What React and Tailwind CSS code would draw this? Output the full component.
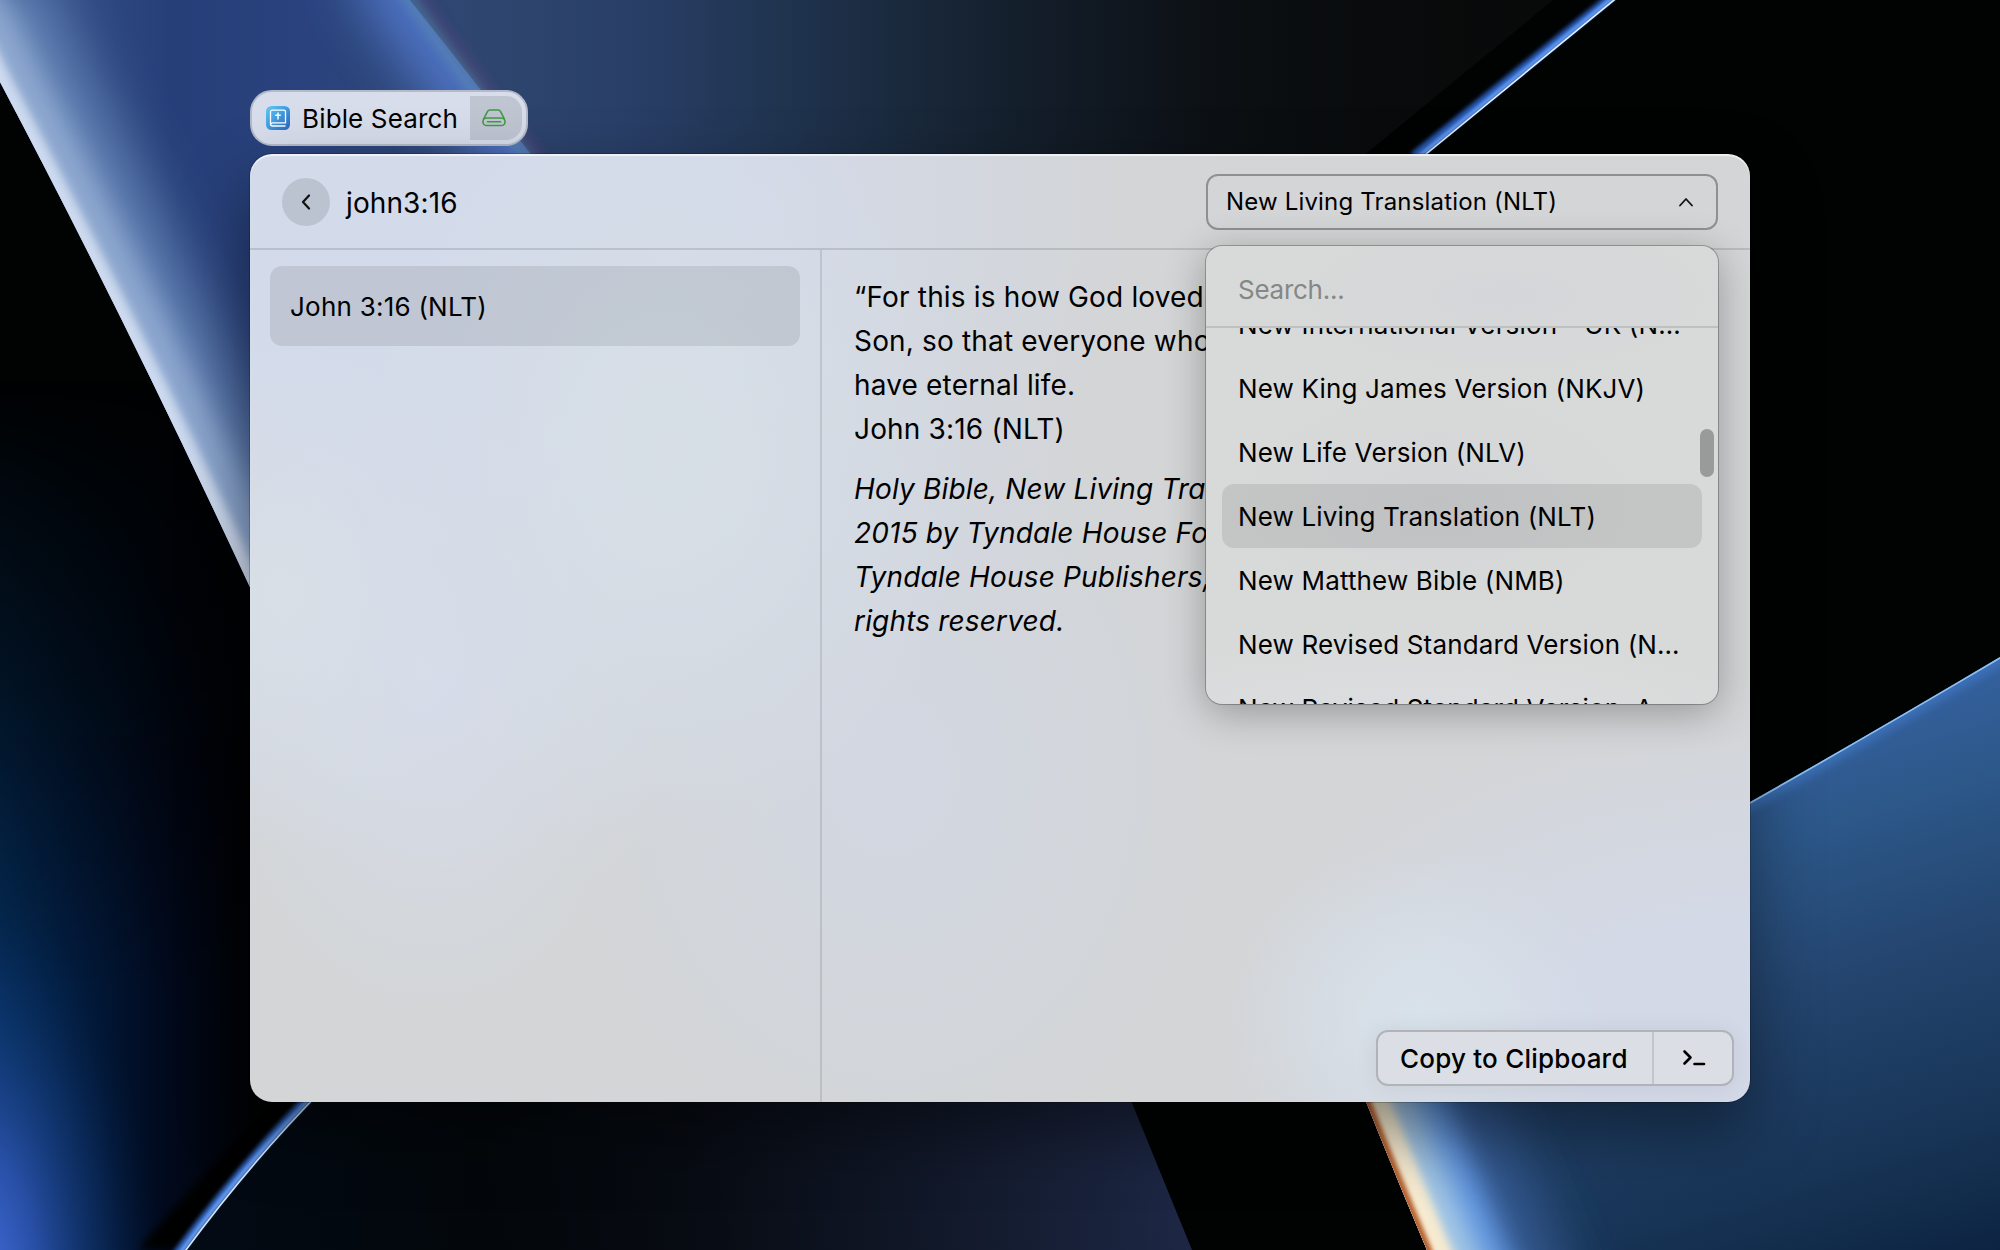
import React from "react";

const VERSIONS = [
  "New International Version - UK (NIVUK)",
  "New King James Version (NKJV)",
  "New Life Version (NLV)",
  "New Living Translation (NLT)",
  "New Matthew Bible (NMB)",
  "New Revised Standard Version (NRSV)",
  "New Revised Standard Version, Anglicised (NRSVA)",
];
const SELECTED = "New Living Translation (NLT)";

const LEFT_EDGE = "M-40 0 L0 82 Q127 322 255 598 L340 790";
const RIGHT_EDGE = "M1330 1010 Q1388 1160 1444 1290 L1490 1400";

function Blur({ id, deviation }) {
  return (
    <filter id={id} filterUnits="userSpaceOnUse" x="-200" y="-200" width="2400" height="1650">
      <feGaussianBlur stdDeviation={deviation} />
    </filter>
  );
}

function Wallpaper() {
  return (
    <svg className="absolute inset-0" width="2000" height="1250" viewBox="0 0 2000 1250" aria-hidden="true">
      <defs>
        <linearGradient id="sky" gradientUnits="userSpaceOnUse" x1="0" y1="0" x2="1560" y2="0">
          <stop offset="0" stopColor="#3a558e" />
          <stop offset="0.11" stopColor="#263f79" />
          <stop offset="0.2" stopColor="#2a437e" />
          <stop offset="0.3" stopColor="#2f4770" />
          <stop offset="0.4" stopColor="#293f68" />
          <stop offset="0.5" stopColor="#203450" />
          <stop offset="0.6" stopColor="#182637" />
          <stop offset="0.68" stopColor="#121b26" />
          <stop offset="0.78" stopColor="#0c1014" />
          <stop offset="0.88" stopColor="#090b0c" />
          <stop offset="1" stopColor="#080909" />
        </linearGradient>
        <linearGradient id="left" x1="0" x2="1" y1="0" y2="0">
          <stop offset="0" stopColor="#042c58" />
          <stop offset="0.3" stopColor="#021b3d" />
          <stop offset="0.65" stopColor="#010a1e" />
          <stop offset="1" stopColor="#010204" />
        </linearGradient>
        <linearGradient id="fadeDown" x1="0" x2="0" y1="0" y2="1">
          <stop offset="0" stopColor="#000" />
          <stop offset="0.35" stopColor="#666" />
          <stop offset="0.7" stopColor="#fff" />
        </linearGradient>
        <mask id="leftMask">
          <rect x="0" y="380" width="400" height="870" fill="url(#fadeDown)" />
        </mask>
        <radialGradient id="corner" gradientUnits="userSpaceOnUse" cx="0" cy="0" r="1" gradientTransform="translate(-30 1290) scale(190 400)">
          <stop offset="0" stopColor="#4a74ea" />
          <stop offset="0.35" stopColor="#3058b8" stopOpacity="0.85" />
          <stop offset="0.7" stopColor="#164084" stopOpacity="0.4" />
          <stop offset="1" stopColor="#032048" stopOpacity="0" />
        </radialGradient>
        <linearGradient id="floor" gradientUnits="userSpaceOnUse" x1="190" y1="1250" x2="1180" y2="1180">
          <stop offset="0" stopColor="#020a14" />
          <stop offset="0.3" stopColor="#03070b" />
          <stop offset="0.5" stopColor="#070b12" />
          <stop offset="0.75" stopColor="#111829" />
          <stop offset="1" stopColor="#1d2744" />
        </linearGradient>
        <linearGradient id="ocean" gradientUnits="userSpaceOnUse" x1="1790" y1="720" x2="1960" y2="1270">
          <stop offset="0" stopColor="#35619f" />
          <stop offset="0.2" stopColor="#2c5788" />
          <stop offset="0.45" stopColor="#24456f" />
          <stop offset="0.75" stopColor="#183557" />
          <stop offset="1" stopColor="#0c2340" />
        </linearGradient>
        <clipPath id="clipLeft">
          <path d="M-40 0 L0 82 Q127 322 255 598 L900 598 L900 0Z" />
        </clipPath>
        <clipPath id="clipRight">
          <path d="M1330 1010 Q1388 1160 1444 1290 L2000 1290 L2000 657 Q1872 733 1750 802Z" />
        </clipPath>
        <clipPath id="clipBeam">
          <path d="M0 0 H410 Q464 68 547 175 L547 600 H0Z" />
        </clipPath>
        <Blur id="b1" deviation="1.2" />
        <Blur id="b2" deviation="2" />
        <Blur id="b4" deviation="4" />
        <Blur id="b12" deviation="12" />
        <Blur id="b25" deviation="28" />
      </defs>
      <rect width="2000" height="1250" fill="#010202" />

      <g mask="url(#leftMask)">
        <rect x="0" y="380" width="250" height="870" fill="url(#left)" />
      </g>
      <rect x="0" y="860" width="220" height="390" fill="url(#corner)" />

      <g clipPath="url(#clipLeft)">
        <rect width="900" height="600" fill="url(#sky)" />
        <g clipPath="url(#clipBeam)">
          <path d="M395 -60 L400 -20 Q450 58 535 168 L600 250" fill="none" stroke="#4f74c8" strokeWidth="84" filter="url(#b25)" />
        </g>
        <path d="M404 -10 Q458 68 541 175" fill="none" stroke="#5c8fae" strokeOpacity="0.45" strokeWidth="16" filter="url(#b4)" />
        <path d="M418 -10 Q472 68 555 175" fill="none" stroke="#55407a" strokeOpacity="0.45" strokeWidth="10" filter="url(#b4)" />
        <path d={LEFT_EDGE} fill="none" stroke="#6f90c0" strokeWidth="160" strokeOpacity="0.8" filter="url(#b25)" />
        <path d={LEFT_EDGE} fill="none" stroke="#a0b8dc" strokeWidth="80" strokeOpacity="0.7" filter="url(#b12)" />
        <path d={LEFT_EDGE} fill="none" stroke="#e2eaf8" strokeWidth="24" strokeOpacity="0.75" filter="url(#b4)" />
      </g>
      <path d="M899 0 H1553 L1340 175 H899Z" fill="url(#sky)" />

      <path d="M1611 -4 L1413 156" stroke="#2c5fc0" strokeWidth="7" filter="url(#b2)" />
      <path d="M1615 -4 L1417 158" stroke="#5a92ea" strokeWidth="5" filter="url(#b1)" />
      <path d="M1619 -4 L1420 159" stroke="#e6f0ff" strokeWidth="1.6" />

      <path d="M310 1102 L280 1102 Q200 1175 138 1250 L184 1250Z" fill="#010101" filter="url(#b4)" />
      <path d="M324 1086 Q249 1164 184 1250 H1192 L1125 1086Z" fill="url(#floor)" />
      <path d="M317 1088 Q242 1164 176 1254" fill="none" stroke="#3468c4" strokeWidth="7" filter="url(#b2)" />
      <path d="M320.500 1088 Q245 1164 179.500 1254" fill="none" stroke="#5f96ea" strokeWidth="4.5" filter="url(#b1)" />
      <path d="M324 1088 Q249 1164 183 1254" fill="none" stroke="#d8e4f4" strokeWidth="1.6" />

      <g clipPath="url(#clipRight)">
        <rect x="1300" y="640" width="700" height="650" fill="url(#ocean)" />
        <path d={RIGHT_EDGE} fill="none" stroke="#3c66a4" strokeWidth="240" strokeOpacity="0.75" filter="url(#b25)" />
        <path d={RIGHT_EDGE} fill="none" stroke="#659ce8" strokeWidth="150" strokeOpacity="0.9" filter="url(#b12)" />
        <path d={RIGHT_EDGE} fill="none" stroke="#a5c8e4" strokeWidth="92" filter="url(#b12)" />
        <path d={RIGHT_EDGE} fill="none" stroke="#f6ead0" strokeWidth="46" filter="url(#b4)" />
        <path d={RIGHT_EDGE} fill="none" stroke="#b8622e" strokeWidth="10" filter="url(#b2)" />
        <path d="M1740 808 Q1872 734 2004 656" fill="none" stroke="#3f78c4" strokeWidth="14" strokeOpacity="0.7" filter="url(#b4)" />
        <path d="M1740 808 Q1872 733 2004 655" fill="none" stroke="#8cc0f2" strokeWidth="3" />
      </g>
    </svg>
  );
}

function BibleIcon() {
  return (
    <svg width="24" height="24" viewBox="0 0 24 24" fill="none">
      <defs>
        <linearGradient id="bible" x1="0" y1="0" x2="1" y2="1">
          <stop offset="0" stopColor="#5ccbf7" />
          <stop offset="0.5" stopColor="#429ade" />
          <stop offset="1" stopColor="#2b62b8" />
        </linearGradient>
      </defs>
      <rect width="24" height="24" rx="5.500" fill="url(#bible)" />
      <path d="M19.500 20H6.700A2.200 2.200 0 0 1 4.500 17.800V5.700A1.500 1.500 0 0 1 6 4.200H18A1.500 1.500 0 0 1 19.500 5.700V16.800H6.500A1.700 1.700 0 0 0 4.800 18" stroke="#fff" strokeWidth="1.300" />
      <path d="M12 6.600V13.400M9.200 9.200H14.800" stroke="#fff" strokeWidth="1.500" />
    </svg>
  );
}

function DriveIcon() {
  return (
    <svg width="24" height="18" viewBox="0 0 24 18" fill="none" stroke="#3f9a45" strokeWidth="1.600" strokeLinecap="round" strokeLinejoin="round">
      <path d="M1.600 10L5.400 2.600A3 3 0 0 1 8 1H16A3 3 0 0 1 18.600 2.600L22.400 10" />
      <rect x="1" y="9" width="22" height="7.500" rx="3.600" />
      <path d="M5.500 12.700H18.500" />
    </svg>
  );
}

function ExtensionPill() {
  return (
    <div className="flex h-14 w-[278px] items-center justify-between rounded-[22px] border-2 border-[#b4bac8] bg-[#d7ddeb] pl-[14px] pr-1">
      <BibleIcon />
      <span className="pt-0.5 text-[26px] leading-8 tracking-[0.005em]">Bible Search</span>
      <div className="flex h-11 w-[52px] items-center justify-center rounded-r-[16px] bg-[#c0c5d2] pr-1">
        <DriveIcon />
      </div>
    </div>
  );
}

function VersionPopup() {
  return (
    <div className="absolute left-0 top-[72px] z-10 flex h-[458px] w-[512px] flex-col overflow-hidden rounded-2xl bg-[#d8dad9] bg-[radial-gradient(ellipse_240px_90px_at_300px_50px,#d5d6d9,transparent),radial-gradient(ellipse_220px_120px_at_230px_255px,#d4d5d7,transparent),radial-gradient(ellipse_400px_70px_at_200px_458px,#dcdde0,transparent)] shadow-[0_0_0_1px_rgba(0,0,0,0.25),0_8px_40px_rgba(0,0,0,0.3)]">
      <div className="h-[82px] shrink-0 border-b-2 border-[#bfc1c1] px-8 pt-7 text-[26px] leading-8 tracking-[-0.01em] text-[#858786]">Search...</div>
      <div className="relative min-h-0 flex-1 overflow-hidden px-4">
        <div className="-mt-9">
          {VERSIONS.map((name) => (
            <div
              key={name}
              className={
                "h-16 rounded-xl pl-4 pr-[18px] text-[26px] leading-[65px] tracking-[0.006em] " +
                (name === SELECTED ? "bg-black/9" : "")
              }
            >
              <div className="truncate">{name}</div>
            </div>
          ))}
        </div>
        <div className="absolute right-1 top-[101px] h-12 w-[14px] rounded-full bg-[#999b9a]" />
      </div>
    </div>
  );
}

function VersionSelect() {
  return (
    <div className="relative">
      <div className="flex h-14 w-[512px] items-center justify-between rounded-xl border-2 border-[#8f9191] pl-[18px] pr-[22px]">
        <span className="text-[24px] leading-8 tracking-[0.007em]">{SELECTED}</span>
        <svg width="16" height="10" viewBox="0 0 16 10" fill="none" stroke="#111" strokeWidth="1.800" strokeLinecap="round" strokeLinejoin="round">
          <path d="M2 8.500L8 2L14 8.500" />
        </svg>
      </div>
      <VersionPopup />
    </div>
  );
}

function Header() {
  return (
    <header className="flex h-24 items-center justify-between border-b-2 border-black/12 px-8 pt-0.5">
      <div className="flex items-center gap-4">
        <div className="flex size-12 items-center justify-center rounded-full bg-black/11">
          <svg width="10" height="16" viewBox="0 0 10 16" fill="none" stroke="#111" strokeWidth="2.200" strokeLinecap="round" strokeLinejoin="round">
            <path d="M8 1.500L2 8L8 14.500" />
          </svg>
        </div>
        <span className="pt-px text-[28px] leading-9 tracking-[0.004em]">john3:16</span>
      </div>
      <VersionSelect />
    </header>
  );
}

function Verse() {
  return (
    <main className="flex min-w-0 flex-1 flex-col justify-between">
      <div className="whitespace-nowrap pl-8 pt-[25px] text-[28px] leading-[44px] tracking-[0.006em]">
        <p>
          “For this is how God loved the world: He gave his one and only
          <br />
          Son, so that everyone who believes in him will not perish but
          <br />
          have eternal life.
          <br />
          John 3:16 (NLT)
        </p>
        <p className="mt-4 italic">
          Holy Bible, New Living Translation, copyright © 1996, 2004,
          <br />
          2015 by Tyndale House Foundation. Used by permission of
          <br />
          Tyndale House Publishers, Carol Stream, Illinois 60188. All
          <br />
          rights reserved.
        </p>
      </div>
      <div className="mb-4 mr-4 flex h-14 w-[358px] self-end rounded-xl border-2 border-[#b0b3b7] bg-[#dbdee4] shadow-[0_2px_24px_rgba(0,0,0,0.07)]">
        <div className="flex w-[274px] items-center pl-[22px] pt-0.5 text-[26px] font-medium leading-8 tracking-[0.008em]">Copy to Clipboard</div>
        <div className="flex flex-1 items-center justify-center border-l-2 border-[#c2c5ca] pl-0.5">
          <svg width="24" height="18" viewBox="0 0 24 18" fill="none" stroke="#000" strokeWidth="2.600" strokeLinecap="round" strokeLinejoin="round">
            <path d="M2.500 2.500L8.500 8.500L2.500 14.500M12.500 15H22" />
          </svg>
        </div>
      </div>
    </main>
  );
}

export default function App() {
  return (
    <div className="relative h-[1250px] w-[2000px] overflow-hidden bg-black font-['Inter',sans-serif] text-black">
      <Wallpaper />
      <div className="relative flex flex-col gap-2 pl-[250px] pt-[90px]">
        <ExtensionPill />
        <div className="flex h-[948px] w-[1500px] flex-col rounded-[22px] bg-[#d3d5d6] bg-[radial-gradient(ellipse_190px_170px_at_1170px_860px,#d8e2eb,transparent),radial-gradient(ellipse_560px_360px_at_1500px_900px,#d3d9e7_35%,transparent),radial-gradient(ellipse_300px_400px_at_420px_300px,#d7dfe6,transparent),radial-gradient(ellipse_200px_260px_at_30px_440px,#d8dfe7,transparent),radial-gradient(ellipse_240px_360px_at_180px_520px,#d6dce9,transparent),radial-gradient(ellipse_700px_680px_at_200px_40px,#d3daea_40%,transparent),radial-gradient(ellipse_340px_420px_at_640px_620px,#d2d7e2,transparent)] shadow-[inset_0_2px_1px_rgba(255,255,255,0.65),0_0_0_1px_rgba(0,0,0,0.2),0_30px_70px_rgba(0,0,0,0.45)]">
          <Header />
          <div className="flex min-h-0 flex-1">
            <aside className="w-[572px] border-r-2 border-black/10 px-5 py-4">
              <div className="flex h-20 items-center rounded-xl bg-black/9 pl-5 pt-0.5 text-[26px] leading-8 tracking-[0.009em]">John 3:16 (NLT)</div>
            </aside>
            <Verse />
          </div>
        </div>
      </div>
    </div>
  );
}
